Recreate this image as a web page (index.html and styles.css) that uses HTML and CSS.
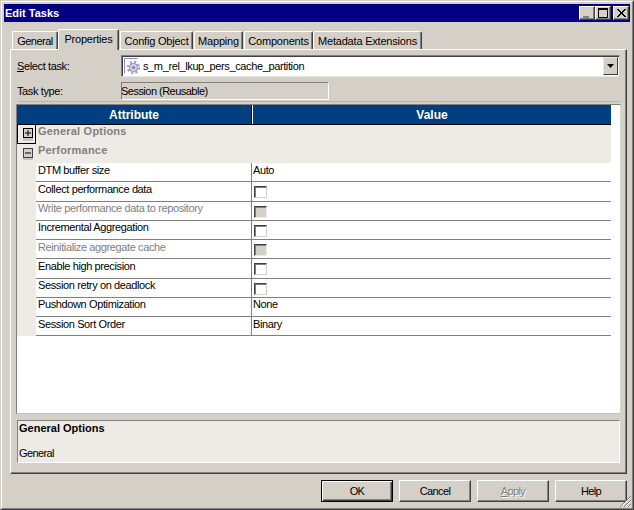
FILE: index.html
```html
<!DOCTYPE html>
<html lang="en">
<head>
<meta charset="utf-8">
<title>Edit Tasks</title>
<link rel="stylesheet" href="styles.css">
</head>
<body>
<div class="window">
  <div class="frame">
    <header class="titlebar">
      <span class="title">Edit Tasks</span>
      <div class="caption-buttons">
        <span class="cap"><svg width="14" height="12" viewBox="0 0 14 12"><rect x="3" y="9" width="6" height="2" fill="#808080"/></svg></span>
        <span class="cap"><svg width="14" height="12" viewBox="0 0 14 12"><path d="M2.500 1.500h9v9h-9z" fill="none" stroke="#000"/><rect x="2" y="1" width="10" height="2"/></svg></span>
        <span class="cap cap-close"><svg width="14" height="12" viewBox="0 0 14 12"><path d="M3 2l8 8M4 2l8 8M11 2l-8 8M12 2l-8 8" stroke="#000" fill="none"/></svg></span>
      </div>
    </header>
    <nav class="tabs">
      <span class="tab tab-general">General</span>
      <span class="tab tab-active">Properties</span>
      <span class="tab tab-config">Config Object</span>
      <span class="tab tab-mapping">Mapping</span>
      <span class="tab tab-components">Components</span>
      <span class="tab tab-metadata">Metadata Extensions</span>
    </nav>
    <section class="panel">
      <div class="field-row select-row">
        <label class="field-label"><u>S</u>elect task:</label>
        <div class="combo">
          <svg class="task-icon" width="17" height="17" viewBox="0 0 17 17">
            <path d="M0.500 15.500V0.500H13.500" fill="none" stroke="#8c8ce0"/>
            <circle cx="9.500" cy="9.500" r="5.500" fill="none" stroke="#a4a4ac" stroke-width="2.400" stroke-dasharray="2.200 2.100"/>
            <circle cx="9.500" cy="9.500" r="4" fill="#e6e6f6" stroke="#84848f"/>
            <circle cx="9.500" cy="9.500" r="2" fill="#8c8cec"/>
          </svg>
          <span class="combo-text">s_m_rel_lkup_pers_cache_partition</span>
          <span class="combo-arrow"><svg width="7" height="4" viewBox="0 0 7 4"><path d="M0 0h7L3.500 4z"/></svg></span>
        </div>
      </div>
      <div class="field-row type-row">
        <span class="field-label">Task type:</span>
        <div class="readonly">Session (Reusable)</div>
      </div>
      <div class="separator"></div>
      <div class="grid-box">
        <div class="grid-head">
          <div class="head-cell head-attr">Attribute</div>
          <div class="head-cell head-value">Value</div>
        </div>
        <div class="group-row focus-row">
          <span class="focus-box"><svg width="10" height="13" viewBox="0 0 10 13"><rect x="0" y="10" width="10" height="3" fill="#c4c4c4"/><rect x="0.500" y="0.500" width="9" height="9" fill="#d4d0c8" stroke="#000"/><path d="M2 5h6M5 2v6" stroke="#000"/></svg></span>
          <span class="group-name">General Options</span>
        </div>
        <div class="group-row">
          <span class="toggle"><svg width="10" height="12" viewBox="0 0 10 12"><rect x="0" y="9" width="10" height="3" fill="#c4c4c4"/><rect x="0.500" y="0.500" width="9" height="9" fill="#d4d0c8" stroke="#404040"/><path d="M2 5h6" stroke="#000"/></svg></span>
          <span class="group-name">Performance</span>
        </div>
        <div class="rows">
          <div class="row"><div class="attr">DTM buffer size</div><div class="val">Auto</div></div>
          <div class="row tall"><div class="attr">Collect performance data</div><div class="val"><span class="check"></span></div></div>
          <div class="row"><div class="attr muted hi">Write performance data to repository</div><div class="val"><span class="check check-off"></span></div></div>
          <div class="row"><div class="attr hi">Incremental Aggregation</div><div class="val"><span class="check"></span></div></div>
          <div class="row"><div class="attr muted">Reinitialize aggregate cache</div><div class="val"><span class="check check-off"></span></div></div>
          <div class="row tall"><div class="attr">Enable high precision</div><div class="val"><span class="check"></span></div></div>
          <div class="row"><div class="attr hi">Session retry on deadlock</div><div class="val"><span class="check"></span></div></div>
          <div class="row"><div class="attr hi">Pushdown Optimization</div><div class="val hi">None</div></div>
          <div class="row"><div class="attr">Session Sort Order</div><div class="val">Binary</div></div>
        </div>
      </div>
      <div class="desc">
        <div class="desc-title">General Options</div>
        <div class="desc-text">General</div>
      </div>
    </section>
    <footer class="buttons">
      <button class="btn btn-default" type="button">OK</button>
      <button class="btn" type="button">Cancel</button>
      <button class="btn btn-disabled" type="button"><u>A</u>pply</button>
      <button class="btn" type="button">Help</button>
    </footer>
  </div>
  <svg class="grip" width="13" height="13" viewBox="0 0 13 13"><path d="M12 1L1 12M12 5L5 12M12 9L9 12" stroke="#808080" fill="none"/><path d="M12 2L2 12M12 6L6 12M12 10L10 12" stroke="#fff" fill="none"/></svg>
</div>
</body>
</html>
```
FILE: styles.css
```css
* { box-sizing: border-box; }
html, body { margin: 0; padding: 0; }
body {
  width: 634px;
  height: 510px;
  overflow: hidden;
  background: #d4d0c8;
  font-family: "Liberation Sans", Arial, sans-serif;
  font-size: 11px;
  letter-spacing: -0.38px;
  color: #000;
}
.window {
  position: relative;
  width: 634px;
  height: 510px;
  border: 1px solid;
  border-color: #d4d0c8 #404040 #404040 #d4d0c8;
  background: #d4d0c8;
}
.frame {
  height: 100%;
  border: 1px solid;
  border-color: #fff #808080 #808080 #fff;
  padding: 2px;
  display: flex;
  flex-direction: column;
}
.titlebar {
  height: 18px;
  flex: none;
  background: #000080;
  color: #fff;
  display: flex;
  align-items: center;
  justify-content: space-between;
  padding: 0 1px 0 1px;
}
.title { font-weight: bold; font-size: 11px; letter-spacing: 0; }
.caption-buttons { display: flex; align-items: center; }
.cap {
  width: 16px;
  height: 14px;
  background: #d4d0c8;
  border: 1px solid;
  border-color: #fff #404040 #404040 #fff;
  box-shadow: inset -1px -1px 0 #808080;
  display: flex;
  align-items: center;
  justify-content: center;
}
.cap-close { margin-left: 2px; }
.tabs {
  height: 23px;
  flex: none;
  margin: 4px 0 0;
  padding: 0 0 0 8px;
  display: flex;
  align-items: flex-end;
  position: relative;
  z-index: 1;
  letter-spacing: -0.2px;
}
.tab {
  height: 18px;
  border: 1px solid;
  border-color: #fff #404040 transparent #fff;
  border-bottom: 0;
  border-radius: 2px 2px 0 0;
  box-shadow: inset -1px 0 0 #808080;
  display: flex;
  align-items: center;
  justify-content: center;
  margin-bottom: 0;
}
.tab-general { width: 46px; letter-spacing: -0.5px; }
.tab-active { width: 61px; height: 21px; margin-bottom: -1px; background: #d4d0c8; padding-bottom: 3px; }
.tab-config { width: 73px; margin-left: 1px; }
.tab-mapping { width: 49px; margin-left: 1px; }
.tab-components { width: 69px; margin-left: 1px; }
.tab-metadata { width: 109px; }
.panel {
  width: 617px;
  height: 425px;
  flex: none;
  margin-left: 6px;
  border: 1px solid;
  border-color: #fff #404040 #404040 #fff;
  box-shadow: inset -1px -1px 0 #808080;
  padding: 5px 0 0 5px;
  display: flex;
  flex-direction: column;
}
.field-row { display: flex; align-items: center; }
.field-label { width: 105px; flex: none; padding-left: 1px; }
.select-row { height: 22px; }
.combo {
  width: 499px;
  height: 22px;
  display: flex;
  align-items: center;
  background: #fff;
  border: 1px solid;
  border-color: #808080 #d4d0c8 #e8e6e0 #808080;
  box-shadow: inset 1px 1px 0 #404040;
  padding: 0 1px 0 2px;
}
.task-icon { flex: none; margin-top: 1px; }
.combo-text { flex: 1; padding-left: 2px; }
.combo-arrow {
  width: 15px;
  height: 18px;
  background: #d4d0c8;
  border: 1px solid;
  border-color: #e8e6e0 #404040 #404040 #e8e6e0;
  display: flex;
  align-items: center;
  justify-content: center;
}
.type-row { height: 18px; margin-top: 5px; }
.readonly {
  width: 208px;
  height: 18px;
  border: 1px solid;
  border-color: #808080 #fff #fff #808080;
  line-height: 16px;
  text-indent: -1px;
  letter-spacing: -0.52px;
}
.separator {
  height: 1px;
  margin: 1px 5px 0 2px;
  background: #b8b4ac;
}
.grid-box {
  width: 605px;
  height: 310px;
  margin-top: 2px;
  border: 1px solid;
  border-color: #808080 #d8d6d0 #c4c2bc #808080;
  background: #fff;
}
.grid-head {
  width: 594px;
  height: 20px;
  display: flex;
  background: #004080;
  border-bottom: 1px solid #000;
  color: #fff;
  font-weight: bold;
  font-size: 12px;
  letter-spacing: 0;
}
.head-cell { display: flex; align-items: center; justify-content: center; }
.head-attr { width: 235px; border-right: 1px solid #000; }
.head-value { flex: 1; border-left: 1px solid #fff; }
.group-row {
  width: 594px;
  height: 19px;
  background: #eeebe6;
  display: flex;
  align-items: flex-start;
  position: relative;
}
.focus-row { height: 19px; }
.focus-box {
  width: 19px;
  height: 19px;
  flex: none;
  border: 1px solid #000;
  border-top: 0;
  padding: 3px 0 0 5px;
}
.focus-box svg, .toggle svg { display: block; }
.toggle { width: 19px; height: 19px; flex: none; padding: 4px 0 0 6px; }
.group-name { margin-left: 2px; font-weight: bold; color: #808080; line-height: 13px; letter-spacing: 0.2px; }
.rows {
  width: 594px;
  background: #eeebe6;
  padding-left: 19px;
}
.row {
  height: 19px;
  display: flex;
  background: #fff;
  border-bottom: 1px solid #808080;
}
.row.tall { height: 20px; }
.attr { width: 216px; padding: 0 0 0 2px; line-height: 14px; border-right: 1px solid #808080; }
.muted { color: #808080; }
.val { flex: 1; padding-left: 1px; line-height: 14px; }
.hi { line-height: 12px; }
.check {
  display: block;
  width: 13px;
  height: 12px;
  margin: 4px 0 0 1px;
  background: #fff;
  border: 1px solid;
  border-color: #404040 #d4d0c8 #d4d0c8 #404040;
  box-shadow: inset 1px 1px 0 #808080;
}
.check-off { background: #d4d0c8; border-color: #404040 #eeebe6 #eeebe6 #404040; }
.desc {
  width: 603px;
  height: 43px;
  margin: 6px 0 0 1px;
  background: #eeebe6;
  border: 1px solid;
  border-color: #808080 #fff #fff #808080;
  padding: 1px 0 0 1px;
}
.desc-title { font-weight: bold; height: 25px; line-height: 13px; letter-spacing: 0; }
.desc-text { line-height: 13px; letter-spacing: -0.6px; }
.buttons {
  flex: none;
  display: flex;
  justify-content: flex-end;
  gap: 6px;
  margin-top: 6px;
  padding-right: 3px;
}
.btn {
  width: 72px;
  height: 22px;
  padding: 0;
  font: inherit;
  letter-spacing: -0.6px;
  color: #000;
  background: #d4d0c8;
  border: 1px solid;
  border-color: #fff #404040 #404040 #fff;
  box-shadow: inset -1px -1px 0 #808080;
}
.btn-default {
  border: 1px solid #000;
  box-shadow: inset 1px 1px 0 #fff, inset -1px -1px 0 #404040, inset -2px -2px 0 #808080;
}
.btn-disabled { color: #808080; text-shadow: 1px 1px 0 #fff; }
.grip { position: absolute; right: 1px; bottom: 1px; }
```
